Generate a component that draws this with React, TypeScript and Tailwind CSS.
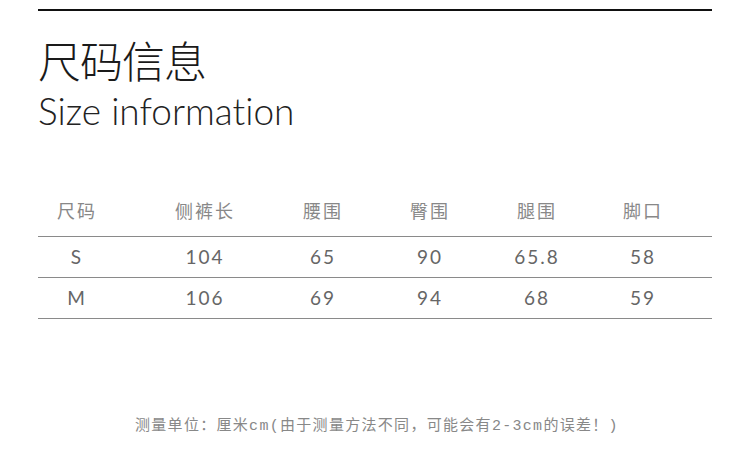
const cols = [
  { label: "尺码", ml: "ml-[4px]" },
  { label: "侧裤长", ml: "ml-[58px]" },
  { label: "腰围", ml: "ml-[48px]" },
  { label: "臀围", ml: "ml-[37px]" },
  { label: "腿围", ml: "ml-[37px]" },
  { label: "脚口", ml: "ml-[36px]" },
];

const rows = [
  ["S", "104", "65", "90", "65.8", "58"],
  ["M", "106", "69", "94", "68", "59"],
];

function Row({ cells, className }: { cells: string[]; className: string }) {
  return (
    <div className={`flex items-center ${className}`}>
      {cells.map((c, i) => (
        <div key={i} className={`w-[70px] shrink-0 text-center ${cols[i].ml}`}>
          {c}
        </div>
      ))}
    </div>
  );
}

export default function App() {
  return (
    <div className="w-[750px] h-[460px] bg-white overflow-hidden">
      <div className="mx-[38px] pt-[9px]">
        <div className="h-[2px] bg-[#111]" />

        <h1 className="mt-[23px] text-[43px] leading-[50px] font-light text-[#1a1a1a] tracking-[-1px] font-['Noto_Sans_CJK_SC',sans-serif]">
          尺码信息
        </h1>
        <h2 className="mt-[7px] text-[37px] leading-[40px] font-light text-[#222] [font-variant-ligatures:none] font-['Lato',sans-serif]">
          Size information
        </h2>

        <div className="mt-[61px] text-[18px] text-[#888] tracking-[2px] font-['Lato','Noto_Sans_CJK_SC',sans-serif]">
          <Row cells={cols.map((c) => c.label)} className="h-[44px] pb-[5px]" />
          {rows.map((r) => (
            <div key={r[0]} className="border-t border-[#8a8a8a]">
              <Row cells={r} className="h-[40px] text-[#666] text-[19px]" />
            </div>
          ))}
          <div className="border-t border-[#8a8a8a]" />
        </div>

        <p className="mt-[98px] ml-[97px] text-[15px] leading-[20px] tracking-[1.3px] text-[#888] font-['Liberation_Mono','Noto_Sans_CJK_SC',monospace]">
          测量单位：厘米cm(由于测量方法不同，可能会有2-3cm的误差！)
        </p>
      </div>
    </div>
  );
}
